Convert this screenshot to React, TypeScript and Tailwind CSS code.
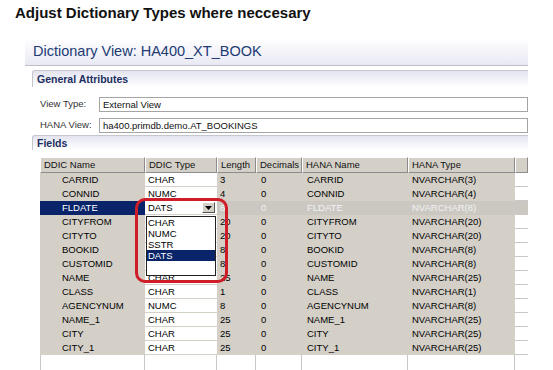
const rows: string[][] = [
  ["CARRID", "CHAR", "3", "0", "CARRID", "NVARCHAR(3)"],
  ["CONNID", "NUMC", "4", "0", "CONNID", "NVARCHAR(4)"],
  ["FLDATE", "DATS", "8", "0", "FLDATE", "NVARCHAR(8)"],
  ["CITYFROM", "", "20", "0", "CITYFROM", "NVARCHAR(20)"],
  ["CITYTO", "", "20", "0", "CITYTO", "NVARCHAR(20)"],
  ["BOOKID", "", "8", "0", "BOOKID", "NVARCHAR(8)"],
  ["CUSTOMID", "", "8", "0", "CUSTOMID", "NVARCHAR(8)"],
  ["NAME", "CHAR", "25", "0", "NAME", "NVARCHAR(25)"],
  ["CLASS", "CHAR", "1", "0", "CLASS", "NVARCHAR(1)"],
  ["AGENCYNUM", "NUMC", "8", "0", "AGENCYNUM", "NVARCHAR(8)"],
  ["NAME_1", "CHAR", "25", "0", "NAME_1", "NVARCHAR(25)"],
  ["CITY", "CHAR", "25", "0", "CITY", "NVARCHAR(25)"],
  ["CITY_1", "CHAR", "25", "0", "CITY_1", "NVARCHAR(25)"],
];

const HeaderCell = ({ label, className }: { label: string; className: string }) => (
  <div
    className={`${className} h-full border-t border-l border-t-white border-l-white border-r border-b border-r-[#8c8c8c] border-b-[#8c8c8c] bg-[#d4d0c8] pl-[3px] leading-[14px] text-[#111]`}
  >
    {label}
  </div>
);

const Row = ({ r, selected }: { r: string[]; selected: boolean }) => {
  const dim = selected ? "text-[#f2f2f2]" : "text-black";
  const bg = selected ? "bg-[#cbc8c2]" : "bg-[#d4d0c8]";
  return (
    <div className="flex h-[14px] leading-[14px]">
      <div
        className={`w-[105px] pl-[22px] ${selected ? "bg-[#0a246a] text-white" : "bg-[#d4d0c8] text-black"}`}
      >
        {r[0]}
      </div>
      {selected ? (
        <div className="w-[72px] bg-white flex items-center pl-[3px] border-b border-[#d4d0c8]">
          <span className="flex-1">{r[1]}</span>
          <div className="w-[13px] h-[11px] mr-[2px] bg-[#d4d0c8] border border-t-white border-l-white border-r-[#555] border-b-[#555] flex items-center justify-center">
            <svg width="7" height="4" viewBox="0 0 7 4">
              <path d="M0 0h7L3.5 4z" fill="#000" />
            </svg>
          </div>
        </div>
      ) : (
        <div className="w-[72px] bg-white border-b border-[#d4d0c8] pl-[3px] text-black">{r[1]}</div>
      )}
      <div className={`w-[39px] pl-[3px] ${bg} ${dim}`}>{r[2]}</div>
      <div className={`w-[46px] pl-[5px] ${bg} ${dim}`}>{r[3]}</div>
      <div className={`w-[106px] pl-[5px] ${bg} ${dim}`}>{r[4]}</div>
      <div className={`w-[107px] pl-[4px] ${bg} ${dim}`}>{r[5]}</div>
      <div
        className={`w-[13px] ${selected ? "bg-[#cbc8c2]" : "bg-white border-b border-[#c8c8c8]"}`}
      />
    </div>
  );
};

export default function App() {
  return (
    <div className="relative w-[553px] h-[370px] overflow-hidden bg-white font-['Liberation_Sans',Arial,sans-serif]">
      <h1 className="pl-[15px] pt-[3px] text-[15px] font-bold leading-[20px] text-[#111]">
        Adjust Dictionary Types where neccesary
      </h1>

      <div className="ml-[25px] mt-[15px] w-[503px]">
        {/* Editor title */}
        <div className="h-[28px] border-b border-[#bdbdc4] bg-gradient-to-b from-white to-[#e9e9f4] pl-[8px] text-[14.5px] leading-[26px] text-[#213b74]">
          Dictionary View: HA400_XT_BOOK
        </div>

        {/* General Attributes */}
        <div className="ml-[7px] mt-[4px] h-[17px] rounded-tl-[3px] border-t border-l border-[#c6c6cf] bg-gradient-to-b from-[#e4e4f1] to-white pl-[4px] text-[10.5px] font-bold leading-[16px] text-[#1d2f60]">
          General Attributes
        </div>
        <div className="mt-[10px] flex h-[15px] items-center text-[9.5px] text-[#333]">
          <span className="w-[74px] pl-[15px]">View Type:</span>
          <div className="flex-1 h-full border border-[#a5a5a5] bg-white pl-[3px] leading-[13px] text-[#111]">
            External View
          </div>
        </div>
        <div className="mt-[6px] flex h-[15px] items-center text-[9.5px] text-[#333]">
          <span className="w-[74px] pl-[15px]">HANA View:</span>
          <div className="flex-1 h-full border border-[#a5a5a5] bg-white pl-[3px] leading-[13px] text-[#111]">
            ha400.primdb.demo.AT_BOOKINGS
          </div>
        </div>

        {/* Fields */}
        <div className="ml-[7px] mt-[2px] h-[15px] rounded-tl-[3px] border-t border-l border-[#c6c6cf] bg-gradient-to-b from-[#e4e4f1] to-white pl-[4px] text-[10.5px] font-bold leading-[15px] text-[#1d2f60]">
          Fields
        </div>

        <div className="relative ml-[15px] mt-[7px] w-[488px] text-[9.5px]">
          <div className="flex h-[16px]">
            <HeaderCell label="DDIC Name" className="w-[105px]" />
            <HeaderCell label="DDIC Type" className="w-[72px]" />
            <HeaderCell label="Length" className="w-[39px]" />
            <HeaderCell label="Decimals" className="w-[46px]" />
            <HeaderCell label="HANA Name" className="w-[106px]" />
            <HeaderCell label="HANA Type" className="w-[107px]" />
            <HeaderCell label="" className="w-[13px]" />
          </div>
          {rows.map((r, i) => (
            <Row key={r[0]} r={r} selected={i === 2} />
          ))}
          <div className="flex h-[16px] bg-white">
            <div className="w-[105px] border-l border-r border-[#c8c8c8]" />
            <div className="w-[72px] border-r border-[#c8c8c8]" />
            <div className="w-[39px] border-r border-[#c8c8c8]" />
            <div className="w-[46px] border-r border-[#c8c8c8]" />
            <div className="w-[106px] border-r border-[#c8c8c8]" />
            <div className="w-[107px] border-r border-[#c8c8c8]" />
          </div>

          {/* open dropdown list */}
          <div className="absolute left-[106px] top-[59px] w-[70px] h-[60px] border border-[#222] bg-white leading-[11px] text-black">
            <div className="h-[11px] pl-[1px]">CHAR</div>
            <div className="h-[11px] pl-[1px]">NUMC</div>
            <div className="h-[11px] pl-[1px]">SSTR</div>
            <div className="h-[11px] pl-[1px] bg-[#0a246a] text-white">DATS</div>
          </div>

          {/* highlight marker */}
          <div className="absolute left-[95px] top-[41px] w-[93px] h-[85px] rounded-[10px] border-[3px] border-[#cf1d28]" />
        </div>
      </div>
    </div>
  );
}
